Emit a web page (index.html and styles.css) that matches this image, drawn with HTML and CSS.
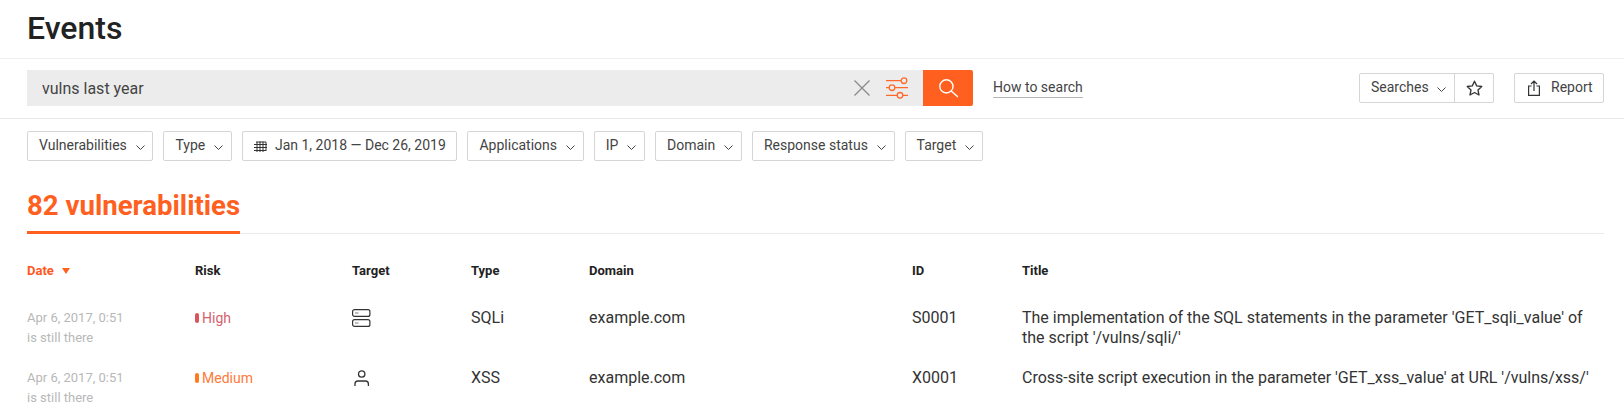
FILE: index.html
```html
<!DOCTYPE html>
<html lang="en">
<head>
<meta charset="utf-8">
<title>Events</title>
<link rel="stylesheet" href="styles.css">
</head>
<body>
<header class="head"><h1 class="title">Events</h1></header>
<section class="searchbar">
  <div class="search">
    <div class="search-field">
      <span class="query">vulns last year</span>
      <svg class="ic-x" width="16" height="16" viewBox="0 0 16 16"><path d="M.5.500l15 15M15.500.500l-15 15" fill="none" stroke="#8c8c8c" stroke-width="1.400"/></svg>
      <svg class="ic-sliders" width="22" height="22" viewBox="0 0 22 22"><g fill="none" stroke="#ff6a2b" stroke-width="1.300"><path d="M0 3.700h15M0 10.700h3M9 10.700h13M0 18.300h11M17 18.300h5"/><circle cx="18" cy="3.700" r="2.800"/><circle cx="6" cy="10.700" r="2.800"/><circle cx="14" cy="18.300" r="2.800"/></g></svg>
    </div>
    <button class="search-btn"><svg width="20" height="20" viewBox="0 0 20 20"><g fill="none" stroke="#fff" stroke-width="1.400"><circle cx="8.400" cy="8.400" r="6.600"/><path d="M13.200 13L20 19"/></g></svg></button>
  </div>
  <a class="how">How to search</a>
  <div class="actions">
    <div class="group">
      <span class="group-a">Searches<svg class="chev" width="9" height="5" viewBox="0 0 9 5"><path d="M.5.500l4 4 4-4" fill="none" stroke="#444" stroke-width="1"/></svg></span>
      <span class="group-b"><svg width="17" height="16" viewBox="0 0 17 16"><path d="M8.500 1.200l2.200 4.700 5.100.6-3.800 3.500 1 5-4.500-2.500L4 15l1-5L1.200 6.500l5.100-.6z" fill="none" stroke="#333" stroke-width="1.300" stroke-linejoin="round"/></svg></span>
    </div>
    <span class="report"><svg width="12" height="16" viewBox="0 0 12 16"><path d="M3.500 6H.6v9.400h10.800V6H8.500M6 11V1M3 4l3-3 3 3" fill="none" stroke="#333" stroke-width="1.200"/></svg><span>Report</span></span>
  </div>
</section>
<section class="filters">
  <span class="chip">Vulnerabilities<svg class="chev" width="9" height="5" viewBox="0 0 9 5"><path d="M.5.500l4 4 4-4" fill="none" stroke="#444" stroke-width="1"/></svg></span>
  <span class="chip">Type<svg class="chev" width="9" height="5" viewBox="0 0 9 5"><path d="M.5.500l4 4 4-4" fill="none" stroke="#444" stroke-width="1"/></svg></span>
  <span class="chip chip-date"><svg class="cal" width="13" height="11" viewBox="0 0 13 11"><path d="M0 3.500h13M0 6.500h13M0 9.500h12M3 1v10M6 .5v10.500M9 .5v10.500M12 1v9M2 1h10" fill="none" stroke="#333" stroke-width="1"/></svg>Jan 1, 2018 — Dec 26, 2019</span>
  <span class="chip">Applications<svg class="chev" width="9" height="5" viewBox="0 0 9 5"><path d="M.5.500l4 4 4-4" fill="none" stroke="#444" stroke-width="1"/></svg></span>
  <span class="chip">IP<svg class="chev" width="9" height="5" viewBox="0 0 9 5"><path d="M.5.500l4 4 4-4" fill="none" stroke="#444" stroke-width="1"/></svg></span>
  <span class="chip">Domain<svg class="chev" width="9" height="5" viewBox="0 0 9 5"><path d="M.5.500l4 4 4-4" fill="none" stroke="#444" stroke-width="1"/></svg></span>
  <span class="chip">Response status<svg class="chev" width="9" height="5" viewBox="0 0 9 5"><path d="M.5.500l4 4 4-4" fill="none" stroke="#444" stroke-width="1"/></svg></span>
  <span class="chip">Target<svg class="chev" width="9" height="5" viewBox="0 0 9 5"><path d="M.5.500l4 4 4-4" fill="none" stroke="#444" stroke-width="1"/></svg></span>
</section>
<section class="tabs"><span class="tab">82 vulnerabilities</span></section>
<section class="table">
  <div class="row row-head">
    <span class="active">Date<i class="sort"></i></span><span>Risk</span><span>Target</span><span>Type</span><span>Domain</span><span>ID</span><span>Title</span>
  </div>
  <div class="row row-a">
    <div class="date">Apr 6, 2017, 0:51<br>is still there</div>
    <div class="risk high"><i></i>High</div>
    <div class="icon"><svg width="19" height="18" viewBox="0 0 19 18"><g fill="none" stroke="#333" stroke-width="1.200"><rect x=".6" y=".6" width="17.300" height="6.800" rx="2"/><rect x=".6" y="10.600" width="17.300" height="6.800" rx="2"/></g><path d="M3 4h3.500M3 14h3.500" stroke="#aaa" stroke-width="1.500"/></svg></div>
    <div>SQLi</div><div>example.com</div><div>S0001</div>
    <div>The implementation of the SQL statements in the parameter 'GET_sqli_value' of<br>the script '/vulns/sqli/'</div>
  </div>
  <div class="row row-b">
    <div class="date">Apr 6, 2017, 0:51<br>is still there</div>
    <div class="risk medium"><i></i>Medium</div>
    <div class="icon"><svg width="19" height="18" viewBox="0 0 19 18"><g fill="none" stroke="#333" stroke-width="1.300"><circle cx="9.700" cy="5" r="3.200"/><path d="M3 17v-2a3 3 0 0 1 3-3h7.400a3 3 0 0 1 3 3v2"/></g></svg></div>
    <div>XSS</div><div>example.com</div><div>X0001</div>
    <div>Cross-site script execution in the parameter 'GET_xss_value' at URL '/vulns/xss/'</div>
  </div>
</section>
</body>
</html>
```
FILE: styles.css
```css
* { box-sizing: border-box; }
html, body { margin: 0; padding: 0; }
body {
  width: 1624px; height: 410px; overflow: hidden; background: #fff;
  font-family: Roboto, "Liberation Sans", sans-serif; color: #333; font-size: 14px;
}
.head { height: 59px; padding: 8px 27px 0; border-bottom: 1px solid #f1f0ee; }
.title { margin: 0; font-size: 32px; line-height: 40px; font-weight: 500; color: #222; }
.searchbar { height: 60px; padding: 11px 20px 0 27px; display: flex; align-items: flex-start; border-bottom: 1px solid #eceae6; }
.search { display: flex; width: 946px; height: 36px; }
.search-field { flex: 1; background: #ececec; display: flex; align-items: center; padding: 0 15px; }
.query { flex: 1; font-size: 16px; color: #444; }
.ic-x { margin-right: 16px; }
.search-btn { width: 50px; height: 36px; border: 0; padding: 0; background: #ff5f1f; border-radius: 0 2px 2px 0; display: flex; align-items: center; justify-content: center; }
.how { margin-left: 20px; margin-top: 8px; font-size: 14px; line-height: 18px; color: #444; border-bottom: 1px solid #b5b5b5; padding-bottom: 1px; }
.actions { margin-left: auto; display: flex; gap: 20px; margin-top: 3px; }
.group { display: flex; height: 30px; border: 1px solid #d5d5d5; border-radius: 2px; }
.group-a { width: 95px; display: flex; align-items: center; padding: 0 0 2px 11px; border-right: 1px solid #d5d5d5; color: #444; }
.group-b { width: 38px; display: flex; align-items: center; justify-content: center; }
.report { width: 90px; height: 30px; border: 1px solid #d5d5d5; border-radius: 2px; display: flex; align-items: center; padding-left: 13px; gap: 11px; color: #444; }
.report span { margin-top: -2px; }
.chev { margin: 5px 0 0 8px; flex: none; }
.filters { display: flex; gap: 10px; padding: 12px 27px 0; }
.chip { height: 30px; display: flex; align-items: center; padding: 0 7.700px 2px 11px; border: 1px solid #d5d5d5; border-radius: 2px; color: #444; white-space: nowrap; font-size: 14px; }
.chip .chev { margin: 5px 0 0 9px; }
.chip-date { padding: 0 10.700px 2px 11px; }
.cal { margin: 2px 8px 0 0; }
.tabs { margin: 21px 20px 0 27px; height: 52px; border-bottom: 1px solid #ececec; display: flex; align-items: flex-end; }
.tab { font-size: 27.600px; line-height: 36px; font-weight: 700; color: #ff5f1f; border-bottom: 3px solid #ff5f1f; padding-bottom: 7px; margin-bottom: -1px; }
.table { padding: 0 27px; }
.row { display: grid; grid-template-columns: 168px 157px 119px 118px 323px 110px 1fr; }
.row-head { font-size: 13px; font-weight: 700; color: #222; padding-top: 29px; line-height: 16px; }
.row-head .active { color: #ff5722; }
.sort { display: inline-block; margin: 0 0 1px 8px; border-left: 4px solid transparent; border-right: 4px solid transparent; border-top: 6px solid #ff5f1f; }
.row > div { font-size: 16px; line-height: 20px; color: #333; }
.row-a { padding-top: 29px; }
.row-b { padding-top: 20px; }
.row > .date { font-size: 13px; line-height: 20px; color: #b8b8b8; }
.row > .risk { font-size: 14px; display: flex; align-items: flex-start; }
.risk i { width: 4px; height: 10px; border-radius: 2px; margin: 5px 3px 0 0; }
.row > .high { color: #d4626c; }
.high i { background: #d9555d; }
.row > .medium { color: #ff7a3a; }
.medium i { background: #ff7a1f; }
.icon svg { display: block; margin-top: 1px; }
```
